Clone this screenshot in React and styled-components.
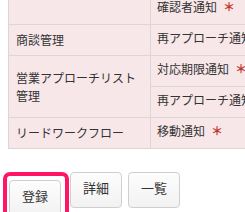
import React from "react";
import styled, { createGlobalStyle } from "styled-components";

const GlobalStyle = createGlobalStyle`
  html, body {
    margin: 0;
    padding: 0;
    background: #fff;
    overflow: hidden;
  }
  body {
    font-family: "Noto Sans CJK JP", "Noto Sans", sans-serif;
    color: #333;
  }
`;

const Page = styled.div`
  width: 245px;
  height: 212px;
  overflow: hidden;
`;

const Table = styled.table`
  margin: -7px 0 0 8px;
  width: 420px;
  border-collapse: collapse;
  table-layout: fixed;
  font-size: 12px;
  line-height: 18px;
  background: #f8e7e9;
`;

const LabelCell = styled.td`
  width: 128px;
  padding: 6px 6px 6px 7px;
  border: 1px solid #dcd6d7;
  vertical-align: middle;
  color: #333;
`;

const ItemCell = styled.td`
  padding: 4px 6px 8px;
  border: 1px solid #dcd6d7;
  vertical-align: top;
  white-space: nowrap;
  overflow: hidden;
  color: #333;
`;

const Required = styled.span`
  color: #c0392b;
  margin-left: 6px;
  font-weight: bold;
`;

const Actions = styled.div`
  display: flex;
  align-items: flex-start;
  margin: 23px 0 0 3px;
`;

const Highlight = styled.div`
  display: flex;
  padding: 4px 4px 0 2px;
  border: 4px solid #ff1466;
  border-radius: 7px;
  margin-right: 1px;
`;

const Button = styled.button`
  height: 36px;
  padding: 0 12px 6px;
  margin-right: ${(p) => (p.$gap ? p.$gap : 0)}px;
  font-family: "Noto Sans CJK JP", sans-serif;
  font-size: 13px;
  color: #333;
  background: linear-gradient(#fdfdfd, #f2f2f2);
  border: 1px solid #cfcfcf;
  border-radius: 4px;
`;

const rows = [
  { label: null, item: "確認者通知", required: true },
  { label: "商談管理", item: "再アプローチ通知" },
  { label: "営業アプローチリスト管理", span: 2, item: "対応期限通知", required: true },
  { item: "再アプローチ通知", skipLabel: true },
  { label: "リードワークフロー", item: "移動通知", required: true },
];

export default function App() {
  return (
    <Page>
      <GlobalStyle />
      <Table>
        <tbody>
          {rows.map((r, i) => (
            <tr key={i}>
              {!r.skipLabel && <LabelCell rowSpan={r.span || 1}>{r.label}</LabelCell>}
              <ItemCell>
                {r.item}
                {r.required && <Required>＊</Required>}
              </ItemCell>
            </tr>
          ))}
        </tbody>
      </Table>
      <Actions>
        <Highlight>
          <Button>登録</Button>
        </Highlight>
        <Button $gap={6}>詳細</Button>
        <Button>一覧</Button>
      </Actions>
    </Page>
  );
}
